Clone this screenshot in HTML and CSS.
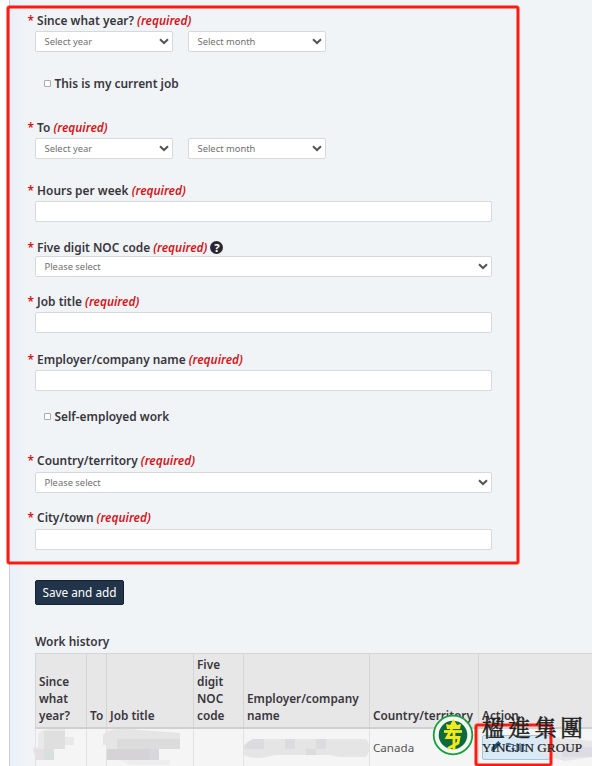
FILE: index.html
```html
<!DOCTYPE html>
<html lang="en">
<head>
    <meta charset="UTF-8">
    <meta name="viewport" content="width=device-width, initial-scale=1.0">
    <title>Work history</title>
    <link rel="stylesheet" href="styles.css">
</head>
<body>

    <div class="page">
        <form id="workForm">
            <div class="field since">
                <label><b>*</b> Since what year? <em>(required)</em></label>
                <div class="row">
                    <div class="control select">Select year <svg viewBox="0 0 10 7"><path d="M1 1.2 L5 5 L9 1.2"/></svg></div>
                    <div class="control select">Select month <svg viewBox="0 0 10 7"><path d="M1 1.2 L5 5 L9 1.2"/></svg></div>
                </div>
            </div>
            <div class="check current"><input type="checkbox"> This is my current job</div>
            <div class="field to">
                <label><b>*</b> To <em>(required)</em></label>
                <div class="row">
                    <div class="control select">Select year <svg viewBox="0 0 10 7"><path d="M1 1.2 L5 5 L9 1.2"/></svg></div>
                    <div class="control select">Select month <svg viewBox="0 0 10 7"><path d="M1 1.2 L5 5 L9 1.2"/></svg></div>
                </div>
            </div>
            <div class="field hours">
                <label><b>*</b> Hours per week <em>(required)</em></label>
                <input class="control" type="text">
            </div>
            <div class="field noc">
                <label><b>*</b> Five digit NOC code <em>(required)</em> <span class="help">?</span></label>
                <div class="control select">Please select <svg viewBox="0 0 10 7"><path d="M1 1.2 L5 5 L9 1.2"/></svg></div>
            </div>
            <div class="field title">
                <label><b>*</b> Job title <em>(required)</em></label>
                <input class="control" type="text">
            </div>
            <div class="field employer">
                <label><b>*</b> Employer/company name <em>(required)</em></label>
                <input class="control" type="text">
            </div>
            <div class="check self"><input type="checkbox"> Self-employed work</div>
            <div class="field country">
                <label><b>*</b> Country/territory <em>(required)</em></label>
                <div class="control select">Please select <svg viewBox="0 0 10 7"><path d="M1 1.2 L5 5 L9 1.2"/></svg></div>
            </div>
            <div class="field city">
                <label><b>*</b> City/town <em>(required)</em></label>
                <input class="control" type="text">
            </div>
            <button type="button">Save and add</button>
        </form>

        <h2>Work history</h2>
        <table>
            <colgroup>
                <col class="c1"><col class="c2"><col class="c3"><col class="c4"><col class="c5"><col class="c6"><col class="c7">
            </colgroup>
            <thead>
                <tr>
                    <th>Since what year?</th>
                    <th>To</th>
                    <th>Job title</th>
                    <th>Five digit NOC code</th>
                    <th>Employer/company name</th>
                    <th>Country/territory</th>
                    <th>Action</th>
                </tr>
            </thead>
            <tbody>
                <tr>
                    <td></td>
                    <td></td>
                    <td></td>
                    <td></td>
                    <td></td>
                    <td>Canada</td>
                    <td><div class="edit"><svg viewBox="0 0 12 12"><path d="M0 12 L1 8 L8 1 L11 4 L4 11 Z"/></svg> Edit</div></td>
                </tr>
            </tbody>
        </table>
    </div>

    <!-- blurred out cells -->
    <svg class="mosaic" viewBox="0 0 592 40">
        <path fill="#e9e9e9" d="M38 8 Q40 2 50 2 H65 V10 H74 V18 H65 V22 H54 V33 H44 Q33 34 33 20 H38 Z"/>
        <path fill="#dfdfdf" d="M44 4 H65 V22 H44 Z"/>
        <path fill="#e4dfe2" d="M34 22 H44 V33 H36 Z"/>
        <path fill="#d9dfdd" d="M44 22 H54 V33 H44 Z"/>
        <path fill="#e5e5e6" d="M107 4 Q120 0 140 3 L180 6 V22 H159 V33 H107 V18 H103 V8 Z"/>
        <path fill="#dddcdd" d="M117 12 H180 V22 H117 Z"/>
        <path fill="#d5d3d5" d="M107 22 H149 V33 H107 Z"/>
        <path fill="#d7d7de" d="M149 22 H159 V33 H149 Z"/>
        <path fill="#eeeeee" d="M120 33 H170 V38 H130 Z"/>
        <path fill="#e5e5e6" d="M253 12 H366 Q373 20 366 30 H340 L330 28 H275 Q255 34 244 28 V18 Z"/>
        <path fill="#dcdbde" d="M253 12 H264 V22 H244 Q246 14 253 12 Z M316 12 H326 V22 H316 Z M285 12 H295 V22 H285 Z M306 22 H316 V28 H306 Z"/>
        <path fill="#e6e5e7" d="M541 18 L552 10 L592 14 V30 L565 34 L541 28 Z"/>
        <path fill="#dcdce2" d="M562 20 H592 V30 H562 Z"/>
    </svg>

    <div class="mark form-mark"></div>
    <div class="mark edit-mark"></div>

    <div class="brand">
        <svg viewBox="0 0 42 42">
            <circle cx="21" cy="21" r="19.3" fill="#f4f8f4" stroke="#16a03c" stroke-width="1.8"/>
            <circle cx="21" cy="21" r="14.3" fill="#0b6b3c"/>
            <path fill="#f5e81c" d="M14 10 L18 11 L21.5 5 L25 11 L29 10 L28 15 H15 Z"/>
            <g fill="none" stroke="#f5e81c" stroke-width="2.8">
                <path d="M12 17.5 H30"/>
                <path d="M20 15 L15 23.5 H27 L26 29 L16 34.5"/>
                <path d="M22 18 V36"/>
            </g>
        </svg>
        <div class="brand-text">
            <div class="brand-zh">楹進集團</div>
            <div class="brand-en">YINGJIN GROUP</div>
        </div>
    </div>

</body>
</html>
```
FILE: styles.css
```css
* {
    box-sizing: border-box;
}

body {
    margin: 0;
    height: 766px;
    overflow: hidden;
    position: relative;
    background-color: #fff;
    font-family: "Noto Sans", sans-serif;
    font-size: 11.9px;
    color: #3a363d;
}

.page {
    margin-left: 9px;
    height: 766px;
    overflow: hidden;
    padding: 12px 0 0 25px;
    border-left: 1px solid #cbcfdd;
    background: linear-gradient(to right, #ebf0f9, #f0f4f7 16px);
}

form {
    width: 457px;
}

label {
    display: block;
    margin-left: -7.5px;
    height: 19px;
    line-height: 17px;
    font-weight: 600;
    white-space: nowrap;
}

label b, label em {
    color: #d3141a;
    font-weight: 600;
}

.row {
    display: flex;
    gap: 15px;
}

.row .control {
    width: 138px;
}

.control {
    display: block;
    width: 457px;
    height: 21px;
    border: 1px solid #d6d8da;
    border-radius: 2px;
    background-color: #fff;
    padding: 0 3px 0 8.5px;
}

.select {
    display: flex;
    align-items: center;
    justify-content: space-between;
    font-size: 9.4px;
    color: #707070;
}

.select svg {
    width: 10px;
    height: 7px;
    fill: none;
    stroke: #555;
    stroke-width: 2;
}

.check {
    display: flex;
    align-items: center;
    height: 18px;
    padding-left: 9px;
    font-weight: 600;
}

.check input {
    appearance: none;
    width: 7px;
    height: 7px;
    margin: 0 3.5px 0 0;
    border: 1px solid #aaa;
    border-radius: 1px;
    background-color: #fff;
}

.current {
    margin-top: 22px;
}

.to {
    margin-top: 27px;
}

.hours {
    margin-top: 23px;
}

.noc {
    margin-top: 17px;
}

.noc label {
    height: 17px;
}

.title {
    margin-top: 16px;
}

.employer {
    margin-top: 18px;
}

.self {
    margin-top: 16px;
}

.country {
    margin-top: 28px;
}

.country label, .city label {
    height: 20px;
}

.country {
    margin-top: 27px;
}

.city {
    margin-top: 16px;
}

.help {
    display: inline-block;
    width: 13px;
    height: 13px;
    border-radius: 50%;
    background-color: #2b2631;
    color: #fff;
    font-size: 11px;
    font-weight: 800;
    line-height: 13px;
    text-align: center;
}

button {
    display: block;
    width: 89px;
    height: 25px;
    margin-top: 30px;
    padding: 0 0 1px;
    border: 1px solid #17222f;
    border-radius: 2px;
    background-color: #22344a;
    color: #fff;
    font-family: inherit;
    font-size: 11.8px;
}

h2 {
    margin: 28px 0 3px;
    font-size: 11.9px;
    font-weight: 600;
    line-height: 17px;
}

table {
    width: 600px;
    table-layout: fixed;
    border-collapse: collapse;
}

.c1 { width: 51px; }
.c2 { width: 20px; }
.c3 { width: 87px; }
.c4 { width: 50px; }
.c5 { width: 126px; }
.c6 { width: 109px; }
.c7 { width: 157px; }

th, td {
    padding: 0 3px;
    border: 1px solid #d5d5d5;
    text-align: left;
    white-space: nowrap;
}

th {
    height: 74px;
    padding-bottom: 3px;
    vertical-align: bottom;
    background-color: #e7e7e7;
    border-bottom: 2px solid #d0d0d0;
    font-size: 11.8px;
    font-weight: 600;
    line-height: 17px;
    white-space: normal;
}

td {
    height: 40px;
    background-color: #f5f5f5;
    border-color: #e2e2e2;
    font-size: 11.6px;
    color: #555;
}

.edit {
    width: 68px;
    height: 25px;
    padding-left: 8px;
    border: 1px solid #a5c6dc;
    border-radius: 2px;
    background-color: #d9e9f6;
    color: #28648f;
    line-height: 22px;
}

.edit svg {
    width: 11px;
    height: 11px;
    fill: #1f5880;
}

.mosaic {
    position: absolute;
    left: 0;
    top: 727px;
    width: 592px;
    height: 40px;
}

.mark {
    position: absolute;
    border: 2px solid #ff1a10;
    border-radius: 2px;
    box-shadow: 0 0 0 0.5px #ff1a10, inset 0 0 0 0.5px #ff1a10;
}

.form-mark {
    left: 7px;
    top: 6px;
    width: 512px;
    height: 558px;
}

.edit-mark {
    left: 475px;
    top: 724px;
    width: 77px;
    height: 42px;
}

.brand {
    position: absolute;
    left: 432px;
    top: 714px;
    display: flex;
    color: #222;
}

.brand svg {
    width: 42px;
    height: 42px;
}

.brand-text {
    margin-left: 8px;
    white-space: nowrap;
}

.brand-zh {
    font-family: "Noto Serif CJK TC", "Noto Sans CJK TC", serif;
    font-size: 22.5px;
    letter-spacing: 3.6px;
    line-height: 25px;
    -webkit-text-stroke: 0.5px #222;
}

.brand-en {
    font-family: "Liberation Serif", serif;
    font-size: 13.2px;
    line-height: 18px;
    -webkit-text-stroke: 0.2px #222;
}
```
